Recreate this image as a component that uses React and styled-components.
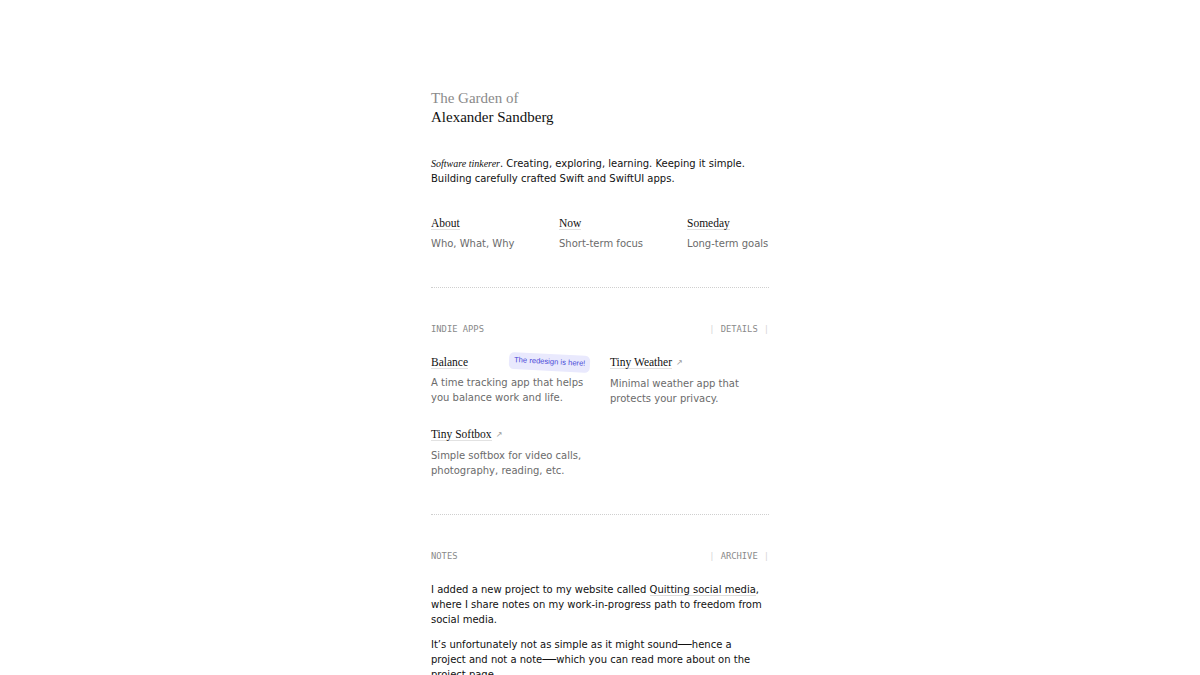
import React from "react";
import styled, { createGlobalStyle } from "styled-components";

const Global = createGlobalStyle`
  html, body { margin: 0; padding: 0; background: #fff; }
  body { font-family: "DejaVu Sans", sans-serif; color: #111; }
  * { box-sizing: border-box; }
`;

const Page = styled.main`
  width: 338px;
  margin: 0 auto;
  padding-top: 89px;
`;

const Title = styled.h1`
  margin: 0;
  font-family: "Liberation Serif", serif;
  font-weight: 400;
  font-size: 15px;
  line-height: 19px;
  color: #111;
`;

const Muted = styled.span`
  display: block;
  color: #8a8a8a;
`;

const Intro = styled.p`
  margin: 29px 0 0;
  font-size: 10px;
  line-height: 15px;
  color: #111;
`;

const Em = styled.em`
  font-family: "Liberation Serif", serif;
  font-size: 10px;
`;

const Nav = styled.nav`
  display: grid;
  grid-template-columns: 128px 128px 1fr;
  margin-top: 29px;
`;

const NavItem = styled.a`
  display: flex;
  flex-direction: column;
  gap: 4px;
  text-decoration: none;
  color: inherit;
`;

const LinkTitle = styled.span`
  font-family: "Liberation Serif", serif;
  font-size: 11.5px;
  line-height: 17px;
  color: #111;
  white-space: nowrap;
`;

const Underlined = styled.span`
  border-bottom: 1px solid #e2e2e2;
`;

const Arrow = styled.span`
  font-family: "DejaVu Sans", sans-serif;
  font-size: 8px;
  color: #999;
  margin-left: 4px;
  position: relative;
  top: -1px;
`;

const Sub = styled.span`
  font-size: 10px;
  line-height: 15px;
  color: #6b6b6b;
`;

const Divider = styled.hr`
  border: 0;
  border-top: 1px dotted #cfcfcf;
  margin: ${(p) => p.$top}px 0 0;
  height: 0;
`;

const SectionHead = styled.div`
  display: flex;
  justify-content: space-between;
  align-items: center;
  margin-top: 35px;
  font-family: "DejaVu Sans Mono", monospace;
  font-size: 8.8px;
  line-height: 12px;
  color: #8a8a8a;
`;

const Bracketed = styled.a`
  color: #8a8a8a;
  text-decoration: none;
  display: flex;
  gap: 6px;
  &::before, &::after {
    content: "|";
    color: #d6d6d6;
  }
`;

const Apps = styled.div`
  display: grid;
  grid-template-columns: 159px 159px;
  column-gap: 20px;
  row-gap: 20px;
  margin-top: 19.5px;
`;

const AppCard = styled.a`
  position: relative;
  display: flex;
  flex-direction: column;
  gap: 4px;
  text-decoration: none;
  color: inherit;
`;

const Badge = styled.span`
  position: absolute;
  right: 0;
  top: 0;
  transform: rotate(3deg);
  background: #e9e9fd;
  color: #4a4ad8;
  font-family: "Liberation Sans", Arial, sans-serif;
  font-size: 7.6px;
  line-height: 10px;
  padding: 3px 5px 4px;
  border-radius: 5px;
  white-space: nowrap;
`;

const Notes = styled.div`
  margin-top: 20.5px;
  display: flex;
  flex-direction: column;
  gap: 10px;
`;

const NoteP = styled.p`
  margin: 0;
  font-size: 10px;
  line-height: 15px;
  color: #111;
`;

const Dash = styled.span`
  font-family: "Liberation Sans", Arial, sans-serif;
  font-size: 14px;
  line-height: 0;
`;

const InlineLink = styled.a`
  color: inherit;
  text-decoration: none;
  border-bottom: 1px solid #dcdcdc;
`;

const navItems = [
  { title: "About", sub: "Who, What, Why" },
  { title: "Now", sub: "Short-term focus" },
  { title: "Someday", sub: "Long-term goals" },
];

const apps = [
  { title: "Balance", desc: "A time tracking app that helps you balance work and life.", badge: "The redesign is here!" },
  { title: "Tiny Weather", desc: "Minimal weather app that protects your privacy.", external: true },
  { title: "Tiny Softbox", desc: "Simple softbox for video calls, photography, reading, etc.", external: true },
];

export default function App() {
  return (
    <>
      <Global />
      <Page>
        <Title>
          <Muted>The Garden of</Muted>
          Alexander Sandberg
        </Title>
        <Intro>
          <Em>Software tinkerer</Em>. Creating, exploring, learning. Keeping it simple.
          Building carefully crafted Swift and SwiftUI apps.
        </Intro>
        <Nav>
          {navItems.map((n) => (
            <NavItem key={n.title} href="#">
              <LinkTitle><Underlined>{n.title}</Underlined></LinkTitle>
              <Sub>{n.sub}</Sub>
            </NavItem>
          ))}
        </Nav>
        <Divider $top={35.5} />
        <SectionHead>
          <span>INDIE APPS</span>
          <Bracketed href="#">DETAILS</Bracketed>
        </SectionHead>
        <Apps>
          {apps.map((a) => (
            <AppCard key={a.title} href="#">
              <LinkTitle>
                <Underlined>{a.title}</Underlined>
                {a.external && <Arrow>↗</Arrow>}
              </LinkTitle>
              <Sub>{a.desc}</Sub>
              {a.badge && <Badge>{a.badge}</Badge>}
            </AppCard>
          ))}
        </Apps>
        <Divider $top={35.5} />
        <SectionHead>
          <span>NOTES</span>
          <Bracketed href="#">ARCHIVE</Bracketed>
        </SectionHead>
        <Notes>
          <NoteP>
            I added a new project to my website called <InlineLink href="#">Quitting social media</InlineLink>,
            where I share notes on my work-in-progress path to freedom from social media.
          </NoteP>
          <NoteP>
            It’s unfortunately not as simple as it might sound<Dash>—</Dash>hence a project and not a
            note<Dash>—</Dash>which you can read more about on the project page.
          </NoteP>
        </Notes>
      </Page>
    </>
  );
}
